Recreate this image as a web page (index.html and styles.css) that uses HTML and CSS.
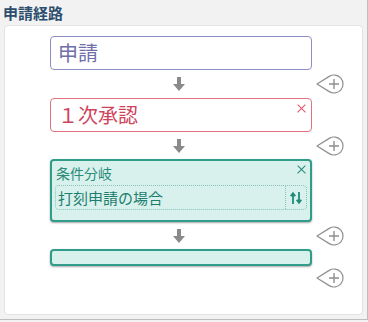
FILE: index.html
```html
<!DOCTYPE html>
<html lang="ja">

<head>
    <meta charset="UTF-8">
    <meta name="viewport" content="width=device-width, initial-scale=1.0">
    <title>申請経路</title>
    <link rel="stylesheet" href="styles.css">
</head>

<body>
    <div class="route">
        <h1 class="route-title">申請経路</h1>
        <div class="panel">
            <div class="flow">
                <div class="step step-apply">申請</div>
                <div></div>

                <div class="link link-first">
                    <svg class="arrow" width="12" height="14" viewBox="0 0 12 14"><path d="M4 0H8V7H12L6 14L0 7H4Z" fill="#8a8a8a"/></svg>
                </div>
                <div class="adder">
                    <svg width="28" height="20" viewBox="0 0 28 20"><path d="M1 10L13.24 2.37A9 9 0 1 1 13.24 17.63Z" fill="#fff" stroke="#8f8f8f" stroke-width="1.2" stroke-linejoin="round"/><path d="M13 10H23M18 5V15" stroke="#8f8f8f" stroke-width="1.4"/></svg>
                </div>

                <div class="step step-approve">
                    １次承認
                    <span class="close close-red"></span>
                </div>
                <div></div>

                <div class="link">
                    <svg class="arrow" width="12" height="14" viewBox="0 0 12 14"><path d="M4 0H8V7H12L6 14L0 7H4Z" fill="#8a8a8a"/></svg>
                </div>
                <div class="adder">
                    <svg width="28" height="20" viewBox="0 0 28 20"><path d="M1 10L13.24 2.37A9 9 0 1 1 13.24 17.63Z" fill="#fff" stroke="#8f8f8f" stroke-width="1.2" stroke-linejoin="round"/><path d="M13 10H23M18 5V15" stroke="#8f8f8f" stroke-width="1.4"/></svg>
                </div>

                <div class="step step-branch">
                    <div class="branch-label">条件分岐</div>
                    <span class="close close-teal"></span>
                    <div class="select">
                        <span class="select-text">打刻申請の場合</span>
                        <span class="sort">
                            <svg width="12" height="14" viewBox="0 0 12 14"><path d="M3 13V3M0.7 5.3L3 2.2L5.3 5.3M9 1V11M6.7 8.7L9 11.8L11.3 8.7" fill="none" stroke="#1f8a78" stroke-width="1.8"/></svg>
                        </span>
                    </div>
                </div>
                <div></div>

                <div class="link">
                    <svg class="arrow" width="12" height="14" viewBox="0 0 12 14"><path d="M4 0H8V7H12L6 14L0 7H4Z" fill="#8a8a8a"/></svg>
                </div>
                <div class="adder">
                    <svg width="28" height="20" viewBox="0 0 28 20"><path d="M1 10L13.24 2.37A9 9 0 1 1 13.24 17.63Z" fill="#fff" stroke="#8f8f8f" stroke-width="1.2" stroke-linejoin="round"/><path d="M13 10H23M18 5V15" stroke="#8f8f8f" stroke-width="1.4"/></svg>
                </div>

                <div class="step step-empty"></div>
                <div></div>

                <div class="link link-last"></div>
                <div class="adder">
                    <svg width="28" height="20" viewBox="0 0 28 20"><path d="M1 10L13.24 2.37A9 9 0 1 1 13.24 17.63Z" fill="#fff" stroke="#8f8f8f" stroke-width="1.2" stroke-linejoin="round"/><path d="M13 10H23M18 5V15" stroke="#8f8f8f" stroke-width="1.4"/></svg>
                </div>
            </div>
        </div>
    </div>
</body>

</html>
```

FILE: styles.css
```css
html {
    background-color: #f2f2f2;
}

body {
    margin: 0;
    font-family: "Noto Sans CJK JP", "Noto Sans", sans-serif;
}

.route {
    width: 363px;
    height: 319px;
    padding: 0 0 0 4px;
    border-right: 1px solid #bdbdbd;
    border-bottom: 1px solid #bdbdbd;
}

.route-title {
    margin: 0 0 0 -1px;
    height: 25px;
    font-size: 15px;
    line-height: 26px;
    font-weight: bold;
    color: #2c4d6e;
}

.panel {
    width: 359px;
    height: 290px;
    box-sizing: border-box;
    background-color: #fff;
    border: 1px solid #e3e3e3;
    border-radius: 4px;
    padding: 10px 0 0 45px;
}

.flow {
    display: grid;
    grid-template-columns: 262px 28px;
    column-gap: 4px;
}

.step {
    position: relative;
    box-sizing: border-box;
    border-radius: 4px;
}

.step-apply,
.step-approve {
    height: 34px;
    padding-left: 7px;
    font-size: 20px;
    line-height: 32px;
}

.step-apply {
    border: 1px solid #8d8dc6;
    color: #6f6fa9;
}

.step-approve {
    border: 1px solid #e0727f;
    color: #cf445c;
}

.step-branch,
.step-empty {
    background-color: #d9f1ed;
    border: 2px solid #2f9d8a;
    box-shadow: 0 1px 2px rgba(0, 0, 0, 0.35);
}

.step-branch {
    height: 63px;
    padding: 2px 3px 0;
}

.step-empty {
    height: 17px;
}

.branch-label {
    font-size: 14px;
    line-height: 20px;
    padding-left: 1px;
    color: #2b8b79;
}

.select {
    display: flex;
    height: 25px;
    margin-top: 2px;
    box-sizing: border-box;
    border: 1px dotted #86c4b9;
    border-radius: 4px;
}

.select-text {
    flex: 1;
    padding-left: 2px;
    font-size: 15px;
    line-height: 23px;
    color: #1d7e6e;
}

.sort {
    display: flex;
    align-items: center;
    justify-content: center;
    width: 20px;
    border-left: 1px dotted #86c4b9;
}

.close {
    position: absolute;
    width: 9px;
    height: 9px;
}

.close::before,
.close::after {
    content: "";
    position: absolute;
    left: -1px;
    top: 4px;
    width: 11px;
    height: 1.2px;
    background-color: currentColor;
    transform: rotate(45deg);
}

.close::after {
    transform: rotate(-45deg);
}

.close-red {
    top: 5px;
    right: 5px;
    color: #e0506c;
}

.close-teal {
    top: 4px;
    right: 4px;
    color: #1f8a78;
}

.link {
    display: flex;
    align-items: center;
    justify-content: center;
    height: 27px;
    padding-right: 4px;
}

.link-first {
    height: 28px;
}

.link-last {
    height: 24px;
}

.adder {
    display: flex;
    align-items: center;
}
```
